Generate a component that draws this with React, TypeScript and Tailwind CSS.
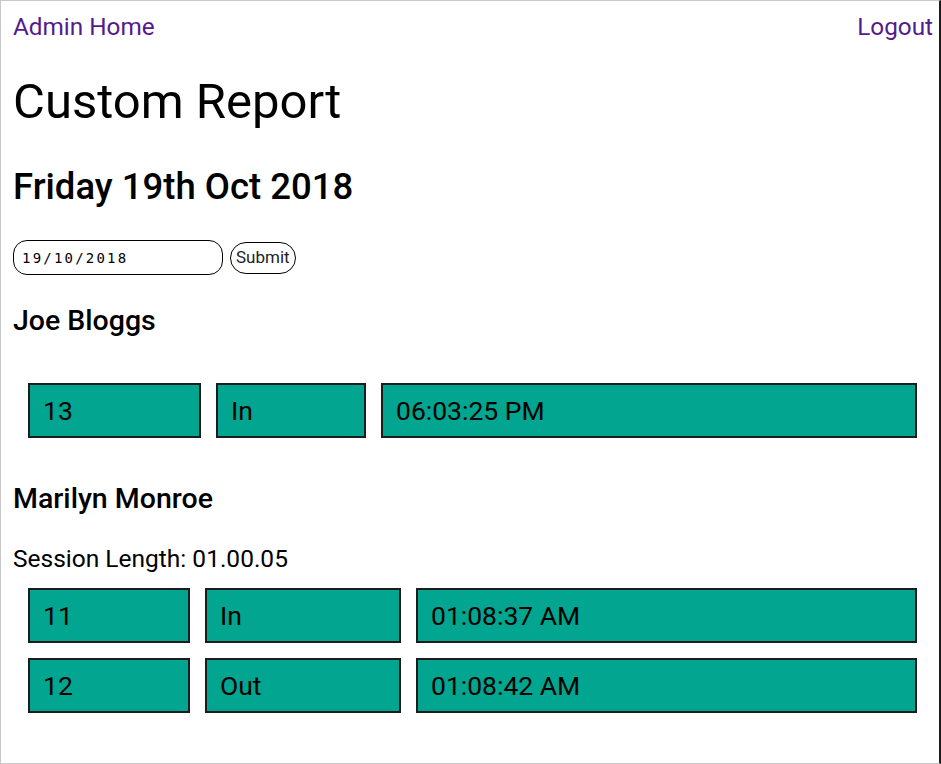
import React from "react";

type Entry = { id: string; dir: string; time: string };

const Cell = ({ children }: { children: React.ReactNode }) => (
  <div className="h-[55px] border-2 border-[#1c1c1c] bg-[#02a58f] pl-[13px] flex items-center text-[26.5px] text-black">
    {children}
  </div>
);

const Rows = ({ entries, cols }: { entries: Entry[]; cols: string }) => (
  <div className={`ml-[27px] mr-[22px] grid gap-x-[15px] gap-y-[15px] ${cols}`}>
    {entries.map((e) => (
      <React.Fragment key={e.id}>
        <Cell>{e.id}</Cell>
        <Cell>{e.dir}</Cell>
        <Cell>{e.time}</Cell>
      </React.Fragment>
    ))}
  </div>
);

export default function App() {
  return (
    <div
      className="w-[941px] h-[764px] bg-white border-t border-l border-b border-[#c8c8c8] border-r-2 border-r-[#1c1c1c] box-border overflow-hidden"
      style={{ fontFamily: "Roboto, 'Noto Sans', sans-serif" }}
    >
      <nav className="flex justify-between pl-[12px] pr-[6px] pt-[12px] text-[24.3px] leading-[28px] text-[#551a8b]">
        <a href="#">Admin Home</a>
        <a href="#">Logout</a>
      </nav>

      <div className="pl-[12px]">
        <h1 className="mt-[33px] text-[49px] leading-[56px] font-normal text-black">Custom Report</h1>
        <h2 className="mt-[35px] text-[36.5px] leading-[44px] font-medium text-black">Friday 19th Oct 2018</h2>

        <form className="mt-[31px] flex items-center gap-[7px]" onSubmit={(e) => e.preventDefault()}>
          <input
            type="text"
            readOnly
            value="19/10/2018"
            className="w-[210px] h-[35px] rounded-[14px] border-[1.5px] border-black px-[8px] text-[14px] tracking-[2.2px] text-black outline-none"
            style={{ fontFamily: "'DejaVu Sans Mono', monospace" }}
          />
          <button type="submit" className="h-[32px] px-[5px] rounded-full border-[1.5px] border-black text-[17px] text-[#222]">
            Submit
          </button>
        </form>

        <h3 className="mt-[30px] text-[28.5px] leading-[32px] font-medium text-black">Joe Bloggs</h3>
      </div>

      <div className="mt-[46px]">
        <Rows cols="grid-cols-[173px_150px_1fr]" entries={[{ id: "13", dir: "In", time: "06:03:25 PM" }]} />
      </div>

      <div className="pl-[12px]">
        <h3 className="mt-[45px] text-[28.5px] leading-[32px] font-medium text-black">Marilyn Monroe</h3>
        <p className="mt-[30px] text-[24.5px] leading-[28px] text-black">Session Length: 01.00.05</p>
      </div>

      <div className="mt-[15px]">
        <Rows
          cols="grid-cols-[162px_196px_1fr]"
          entries={[
            { id: "11", dir: "In", time: "01:08:37 AM" },
            { id: "12", dir: "Out", time: "01:08:42 AM" },
          ]}
        />
      </div>
    </div>
  );
}
